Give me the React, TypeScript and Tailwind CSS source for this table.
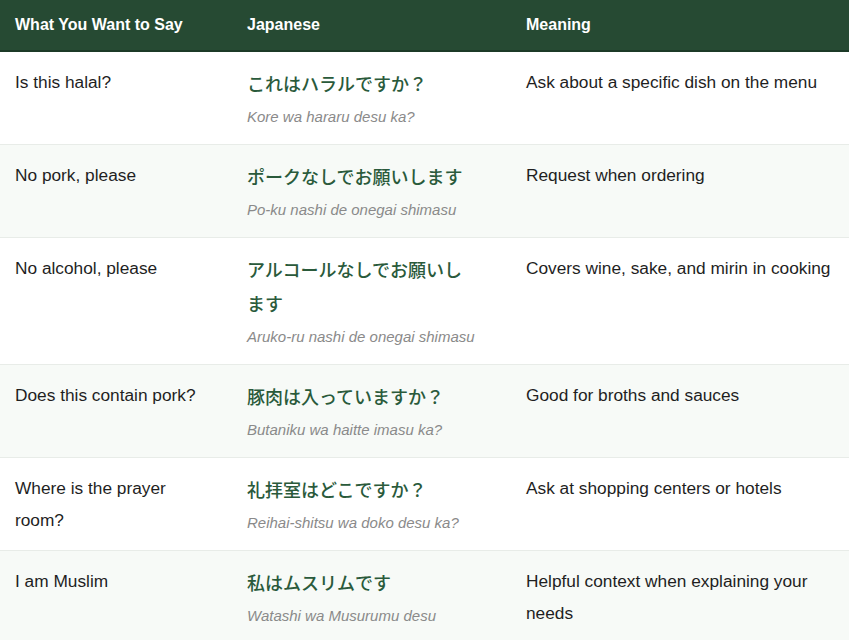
const phrases = [
  {
    say: "Is this halal?",
    ja: "これはハラルですか？",
    romaji: "Kore wa hararu desu ka?",
    meaning: "Ask about a specific dish on the menu",
  },
  {
    say: "No pork, please",
    ja: "ポークなしでお願いします",
    romaji: "Po-ku nashi de onegai shimasu",
    meaning: "Request when ordering",
  },
  {
    say: "No alcohol, please",
    ja: "アルコールなしでお願いします",
    romaji: "Aruko-ru nashi de onegai shimasu",
    meaning: "Covers wine, sake, and mirin in cooking",
  },
  {
    say: "Does this contain pork?",
    ja: "豚肉は入っていますか？",
    romaji: "Butaniku wa haitte imasu ka?",
    meaning: "Good for broths and sauces",
  },
  {
    say: "Where is the prayer room?",
    ja: "礼拝室はどこですか？",
    romaji: "Reihai-shitsu wa doko desu ka?",
    meaning: "Ask at shopping centers or hotels",
  },
  {
    say: "I am Muslim",
    ja: "私はムスリムです",
    romaji: "Watashi wa Musurumu desu",
    meaning: "Helpful context when explaining your needs",
  },
];

export default function App() {
  return (
    <div className="min-h-screen bg-white font-['Liberation_Sans',Arial,sans-serif] text-[#1f1f1f]">
      {/* Header */}
      <div className="grid h-[52px] grid-cols-[232px_279px_1fr] items-center border-b-2 border-[#1c3a27] bg-[#264a33] text-[16px] font-bold text-white">
        <div className="px-[15px]">What You Want to Say</div>
        <div className="px-[15px]">Japanese</div>
        <div className="px-[15px]">Meaning</div>
      </div>

      {phrases.map((p, i) => (
        <div
          key={p.say}
          className={`grid grid-cols-[232px_279px_1fr] border-b border-[#e8ece8] pt-[14px] pb-[13px] ${
            i % 2 === 1 ? "bg-[#f7faf7]" : "bg-white"
          }`}
        >
          <div className="px-[15px] text-[17.3px] leading-[32px]">{p.say}</div>
          <div className="px-[15px]">
            <div className="max-w-[228px] font-['Noto_Sans_CJK_JP',sans-serif] text-[18px] font-medium leading-[34px] text-[#2a5a3b]">
              {p.ja}
            </div>
            <div className="mt-[3px] text-[15px] italic leading-[28px] text-[#8a8a8a]">{p.romaji}</div>
          </div>
          <div className="pl-[15px] pr-[10px] text-[17.3px] leading-[32px]">{p.meaning}</div>
        </div>
      ))}
    </div>
  );
}
